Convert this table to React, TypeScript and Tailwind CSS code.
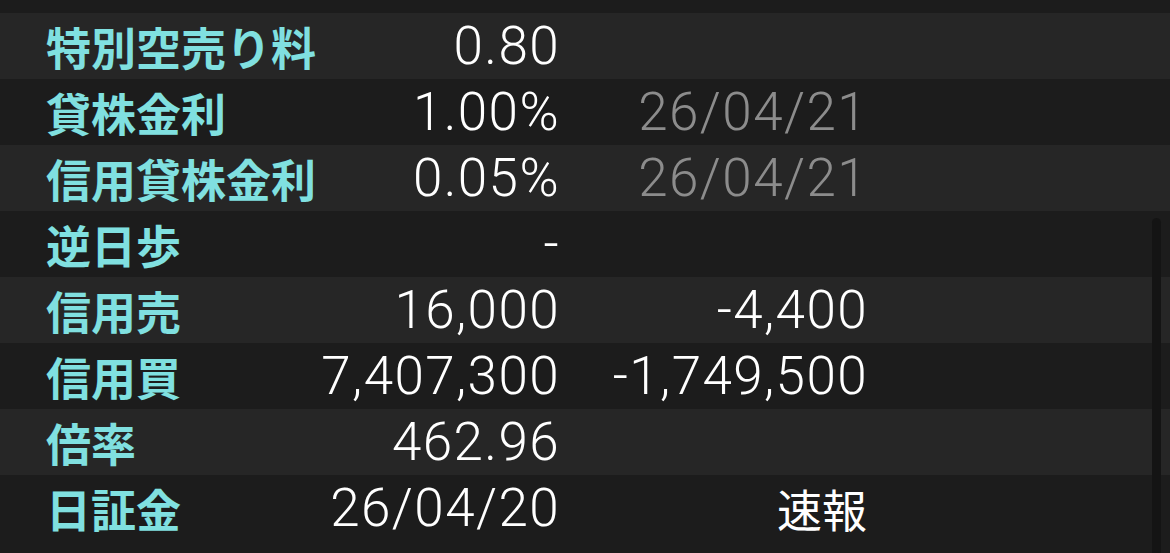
import React from 'react';

interface Row {
  label: string;
  value: string;
  extra?: string;
  extraKind?: 'date' | 'num' | 'jp';
}

const rows: Row[] = [
  { label: '特別空売り料', value: '0.80' },
  { label: '貸株金利', value: '1.00%', extra: '26/04/21', extraKind: 'date' },
  { label: '信用貸株金利', value: '0.05%', extra: '26/04/21', extraKind: 'date' },
  { label: '逆日歩', value: '-' },
  { label: '信用売', value: '16,000', extra: '-4,400', extraKind: 'num' },
  { label: '信用買', value: '7,407,300', extra: '-1,749,500', extraKind: 'num' },
  { label: '倍率', value: '462.96' },
  { label: '日証金', value: '26/04/20', extra: '速報', extraKind: 'jp' },
];

const jp = "font-['Noto_Sans_CJK_JP','Noto_Sans',sans-serif]";
const num = "font-['Roboto','Liberation_Sans',sans-serif] font-light tracking-[1.4px]";

export default function App() {
  return (
    <div className="relative w-[1170px] h-[553px] overflow-hidden bg-[#1c1c1c]">
      <div className="h-[13px]" />
      {rows.map((r, i) => (
        <div
          key={r.label}
          className={`grid grid-cols-[46px_269px_245px_308px_1fr] items-center h-[66px] ${
            i % 2 === 0 ? 'bg-[#262626]' : 'bg-[#1c1c1c]'
          }`}
        >
          <div />
          <div className={`${jp} font-bold text-[45px] leading-none text-[#80e0e0] whitespace-nowrap`}>
            {r.label}
          </div>
          <div className={`${num} text-[53px] leading-none text-white text-right`}>{r.value}</div>
          <div
            className={`text-right leading-none whitespace-nowrap ${
              r.extraKind === 'jp'
                ? `${jp} text-[45px] text-white pr-[1px]`
                : r.extraKind === 'date'
                ? `${num} text-[53px] text-[#8c8c8c]`
                : `${num} text-[53px] text-white`
            }`}
          >
            {r.extra ?? ''}
          </div>
          <div />
        </div>
      ))}

      {/* scrollbar thumb */}
      <div className="absolute left-[1152px] top-[218px] bottom-0 w-[9px] rounded-t-full bg-[#141414]" />
    </div>
  );
}
